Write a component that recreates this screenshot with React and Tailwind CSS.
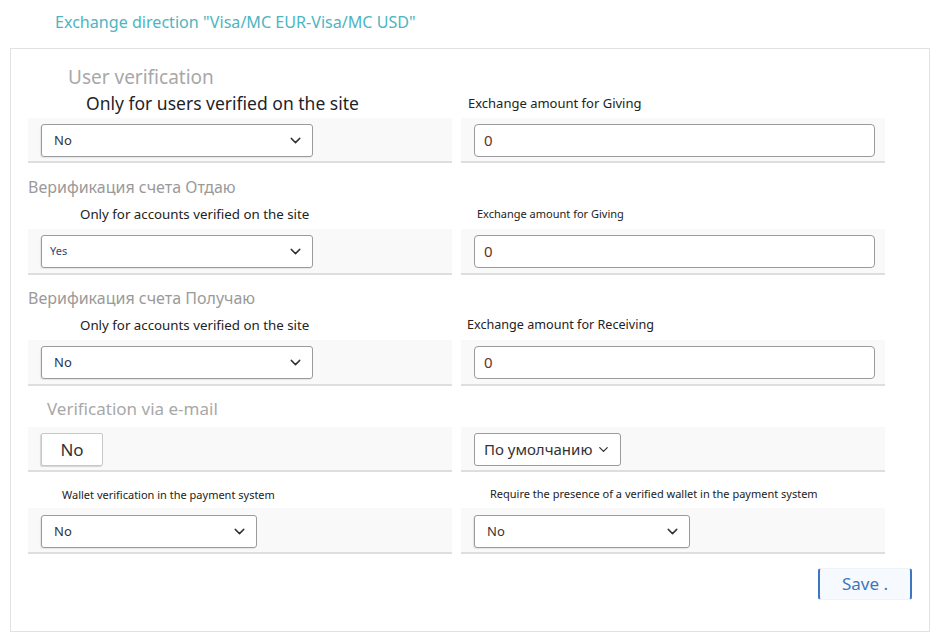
import { ChevronDown } from "lucide-react";

const font = { fontFamily: '"Noto Sans", "Open Sans", sans-serif' };

function Band({ h, pt, children }) {
  return (
    <div className={`${h} ${pt} pl-[13px] bg-[#f9f9f9] border-b-2 border-[#dedede]`}>
      {children}
    </div>
  );
}

function Select({ w, value, text = "text-[13px] text-[#333]", pl = "pl-[12px]" }) {
  return (
    <div
      className={`${w} h-[33px] flex items-center justify-between bg-white border border-[#9b9b9b] rounded-[3px] ${pl} pr-[8px] shadow-[-1px_1px_1px_rgba(0,0,0,0.08)]`}
    >
      <span className={text}>{value}</span>
      <ChevronDown className="w-[17px] h-[17px] text-[#333]" strokeWidth={2} />
    </div>
  );
}

function Input({ value = "0" }) {
  return (
    <div className="w-[401px] h-[33px] flex items-center bg-white border border-[#9b9b9b] rounded-[4px] pl-[9px]">
      <span className="text-[15px] text-[#6b3318]">{value}</span>
    </div>
  );
}

export default function App() {
  return (
    <div className="w-[946px] h-[639px] bg-white" style={font}>
      <div className="h-[48px] pl-[55px] pt-[10px] text-[16.1px] leading-[24px] text-[#4cb5c1]">
        Exchange direction "Visa/MC EUR-Visa/MC USD"
      </div>

      <div className="ml-[10px] w-[920px] h-[584px] border border-[#e2e2e2]">
        {/* User verification */}
        <div className="h-[40px] pt-[16px] pl-[57px] text-[19px] leading-[24px] text-[#a8a8a8]">
          User verification
        </div>
        <div className="grid grid-cols-[424px_424px] gap-x-[9px] pl-[17px]">
          <div>
            <div className="h-[29px] flex items-center pl-[58px] text-[17.5px] text-[#1f1f2a]">
              Only for users verified on the site
            </div>
            <Band h="h-[45px]" pt="pt-[6px]">
              <Select w="w-[272px]" value="No" />
            </Band>
          </div>
          <div>
            <div className="h-[29px] flex items-center pl-[7px] text-[13px] text-[#222]">
              Exchange amount for Giving
            </div>
            <Band h="h-[45px]" pt="pt-[6px]">
              <Input />
            </Band>
          </div>
        </div>

        {/* Account verification: giving */}
        <div className="h-[37px] pt-[14px] pl-[17px] text-[16px] leading-[20px] text-[#9a9a9a]">
          Верификация счета Отдаю
        </div>
        <div className="grid grid-cols-[424px_424px] gap-x-[9px] pl-[17px]">
          <div>
            <div className="h-[29px] flex items-center pl-[52px] text-[13.3px] text-[#222]">
              Only for accounts verified on the site
            </div>
            <Band h="h-[46px]" pt="pt-[6px]">
              <Select w="w-[272px]" value="Yes" text="text-[11px] text-[#2c4a7c]" pl="pl-[8px]" />
            </Band>
          </div>
          <div>
            <div className="h-[29px] flex items-center pl-[16px] text-[11px] text-[#222]">
              Exchange amount for Giving
            </div>
            <Band h="h-[46px]" pt="pt-[6px]">
              <Input />
            </Band>
          </div>
        </div>

        {/* Account verification: receiving */}
        <div className="h-[36px] pt-[13px] pl-[17px] text-[16px] leading-[20px] text-[#9a9a9a]">
          Верификация счета Получаю
        </div>
        <div className="grid grid-cols-[424px_424px] gap-x-[9px] pl-[17px]">
          <div>
            <div className="h-[29px] flex items-center pl-[52px] text-[13.3px] text-[#222]">
              Only for accounts verified on the site
            </div>
            <Band h="h-[46px]" pt="pt-[6px]">
              <Select w="w-[272px]" value="No" text="text-[13px] text-[#1f3556]" />
            </Band>
          </div>
          <div>
            <div className="h-[29px] flex items-center pl-[6px] text-[12.6px] text-[#222]">
              Exchange amount for Receiving
            </div>
            <Band h="h-[46px]" pt="pt-[6px]">
              <Input />
            </Band>
          </div>
        </div>

        {/* Email verification */}
        <div className="h-[41px] pt-[12px] pl-[36px] text-[17px] leading-[22px] text-[#a8a8a8]">
          Verification via e-mail
        </div>
        <div className="grid grid-cols-[424px_424px] gap-x-[9px] pl-[17px]">
          <Band h="h-[45px]" pt="pt-[6px]">
            <div className="w-[62px] h-[33px] flex items-center justify-center bg-white border border-[#c8c8c8] rounded-[2px] shadow-[-1px_1px_1px_rgba(0,0,0,0.15)] text-[17px] text-[#333]">
              No
            </div>
          </Band>
          <Band h="h-[45px]" pt="pt-[6px]">
            <div className="w-[147px] h-[33px] flex items-center gap-[4px] bg-white border border-[#9b9b9b] rounded-[3px] pl-[9px] text-[15px] text-[#333]">
              <span>По умолчанию</span>
              <ChevronDown className="w-[15px] h-[15px] text-[#333]" strokeWidth={2} />
            </div>
          </Band>
        </div>

        {/* Wallet verification */}
        <div className="grid grid-cols-[424px_424px] gap-x-[9px] pl-[17px]">
          <div>
            <div className="h-[36px] pt-[13px] pl-[34px] text-[11px] leading-[20px] text-[#222]">
              Wallet verification in the payment system
            </div>
            <Band h="h-[46px]" pt="pt-[7px]">
              <Select w="w-[216px]" value="No" />
            </Band>
          </div>
          <div>
            <div className="h-[36px] pt-[12px] pl-[29px] text-[11px] leading-[20px] text-[#222]">
              Require the presence of a verified wallet in the payment system
            </div>
            <Band h="h-[46px]" pt="pt-[7px]">
              <Select w="w-[216px]" value="No" />
            </Band>
          </div>
        </div>

        {/* Save */}
        <div className="flex justify-end pt-[14px] pr-[17px]">
          <button className="w-[94px] h-[32px] flex items-center justify-center bg-[#f6f9fd] border-x-2 border-y border-x-[#3d78bf] border-y-[#eef3fa] rounded-[3px] text-[17px] text-[#3d78bf]">
            Save .
          </button>
        </div>
      </div>
    </div>
  );
}
